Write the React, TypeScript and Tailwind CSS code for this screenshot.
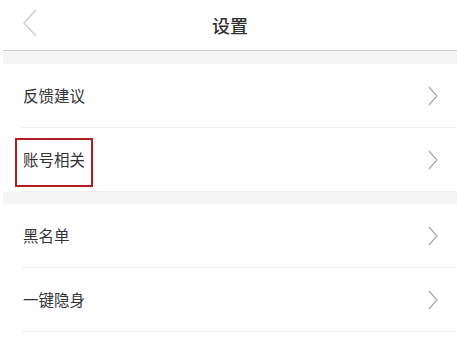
import React from "react";

function Chevron() {
  return (
    <svg width="10" height="20" viewBox="0 0 10 20" fill="none" aria-hidden>
      <polyline points="1,1 9,10 1,19" stroke="#a8a8a8" strokeWidth="1.2" />
    </svg>
  );
}

function Row({ label, boxed }: { label: string; boxed?: boolean }) {
  return (
    <div className="relative">
      <div className="flex h-[63px] items-center justify-between pl-[20px] pr-[19px]">
        <span className="text-[15.5px] text-[#333333]">{label}</span>
        <Chevron />
      </div>
      <div className="ml-[19px] h-px bg-[#ececec]" />
      {boxed && (
        <div className="absolute left-[12px] top-[10px] h-[49px] w-[78px] border-[2.5px] border-[#b01e23]" />
      )}
    </div>
  );
}

export default function App() {
  return (
    <div
      className="h-[340px] w-[457px] overflow-hidden bg-white pl-[3px]"
      style={{ fontFamily: '"Noto Sans CJK SC", "Noto Sans", sans-serif' }}
    >
      <header className="relative flex h-[51px] items-center justify-center border-b border-[#cdcdcd]">
        <svg
          className="absolute left-[19px] top-[9px]"
          width="16"
          height="28"
          viewBox="0 0 16 28"
          fill="none"
          aria-hidden
        >
          <polyline points="14,1 2,14 14,27" stroke="#cfcfcf" strokeWidth="1.6" />
        </svg>
        <h1 className="text-[18px] font-medium text-[#333333]">设置</h1>
      </header>
      <div className="h-[13px] bg-[#f5f5f5]" />
      <Row label="反馈建议" />
      <Row label="账号相关" boxed />
      <div className="h-[12px] bg-[#f5f5f5]" />
      <Row label="黑名单" />
      <Row label="一键隐身" />
    </div>
  );
}
